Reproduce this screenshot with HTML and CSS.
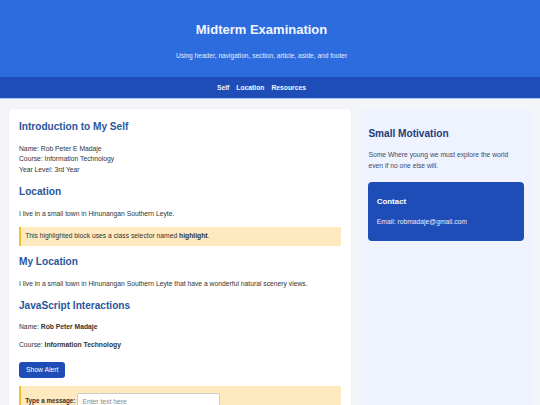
FILE: index.html
```html
<!DOCTYPE html>
<html lang="en">
<head>
  <meta charset="UTF-8"/>
  <meta name="viewport" content="width=device-width, initial-scale=1.0"/>
  <title>Midterm Examination</title>
  <link rel="stylesheet" href="styles.css">
</head>
<body>
<header class="site-header">
  <h1>Midterm Examination</h1>
  <p>Using header, navigation, section, article, aside, and footer</p>
</header>

<nav class="site-nav">
  <a href="#self">Self</a>
  <a href="#location">Location</a>
  <a href="#resources">Resources</a>
</nav>

<div class="layout">
  <main class="card">
    <section id="self">
      <h2>Introduction to My Self</h2>
      <p>Name: Rob Peter E Madaje<br>Course: Information Technology<br>Year Level: 3rd Year</p>
    </section>

    <section id="location">
      <h2>Location</h2>
      <p>I live in a small town in Hinunangan Southern Leyte.</p>
      <div class="highlight">This highlighted block uses a class selector named <strong>highlight</strong>.</div>
    </section>

    <article>
      <h2>My Location</h2>
      <p>I live in a small town in Hinunangan Southern Leyte that have a wonderful natural scenery views.</p>
    </article>

    <section id="resources">
      <h2>JavaScript Interactions</h2>
      <p>Name: <strong>Rob Peter Madaje</strong></p>
      <p>Course: <strong>Information Technology</strong></p>
      <div class="actions">
        <button class="btn" onclick="showAlert()">Show Alert</button>
      </div>
      <div class="highlight message-row">
        <label for="msgInput">Type a message:</label>
        <input id="msgInput" type="text" placeholder="Enter text here"/>
      </div>
    </section>
  </main>

  <aside class="sidebar">
    <h2>Small Motivation</h2>
    <p>Some Where young we must explore the world even if no one else will.</p>
    <div class="contact">
      <h3>Contact</h3>
      <p>Email: robmadaje@gmail.com</p>
    </div>
  </aside>
</div>

<script>
  function showAlert() {
    const msg = document.getElementById('msgInput').value.trim();
    alert(msg ? msg : 'Hello from Rob Peter Madaje!');
  }
</script>
</body>
</html>
```

FILE: styles.css
```css
body {
  margin: 0;
  background-color: #f3f5f9;
  font-family: 'Liberation Sans', Arial, sans-serif;
  font-size: 6.75px;
  line-height: 10.8px;
  color: #333;
}

.site-header {
  background-color: #2d6cdf;
  color: #f2f6ff;
  text-align: center;
  padding: 22px 17px 17.5px 0;
}

.site-header h1 {
  margin: 0;
  font-size: 13px;
  line-height: 16px;
  font-weight: 700;
}

.site-header p {
  margin: 12.5px 0 0;
  font-size: 6.6px;
  line-height: 9px;
  color: #e3ecff;
}

.site-nav {
  background-color: #1e4db7;
  border-bottom: 1px solid #a9c4f4;
  display: flex;
  justify-content: center;
  gap: 7px;
  padding-right: 17px;
  line-height: 21px;
}

.site-nav a {
  color: #f2f6ff;
  font-weight: 700;
  text-decoration: none;
}

.layout {
  display: grid;
  grid-template-columns: 342px 172px;
  gap: 9px;
  padding: 10px 8px 0 9px;
}

.card {
  background: #fff;
  border-radius: 4px;
  padding: 10px;
  box-shadow: 0 0 3px rgba(0,0,0,0.04);
}

.card h2 {
  margin: 8.4px 0;
  font-size: 10.1px;
  line-height: 16.2px;
  color: #2a569b;
}

.card section:first-child h2 {
  margin-top: 0;
}

.card p {
  margin: 6.75px 0;
}

.highlight {
  background-color: #ffe9bf;
  border-left: 2px solid #f3c02f;
  padding: 4.2px 4.2px;
  margin-top: 6.75px;
}

.actions {
  margin: 11px 0 8px;
}

.btn {
  display: block;
  background-color: #1e4db7;
  color: #fff;
  border: none;
  border-radius: 3px;
  font-family: inherit;
  font-size: 6.75px;
  line-height: 8px;
  padding: 4px 7px;
  cursor: pointer;
}

.message-row {
  margin-top: 0;
  padding-top: 7px;
  display: flex;
  align-items: center;
  gap: 2px;
}

.message-row label {
  font-weight: 700;
  font-size: 6.3px;
  color: #333;
}

.message-row input {
  width: 143px;
  box-sizing: border-box;
  height: 17px;
  border: 1px solid #ccc;
  border-radius: 2px;
  font-family: inherit;
  font-size: 6.75px;
  padding: 0 4px;
  background: #fff;
}

.message-row input::placeholder {
  color: #888;
}

.sidebar {
  background-color: #eef3ff;
  border-radius: 4px;
  padding: 8.4px;
}

.sidebar h2 {
  margin: 8.4px 0;
  font-size: 10.1px;
  line-height: 16.2px;
  color: #1f3c7c;
}

.sidebar p {
  margin: 8.4px 0 6.75px;
  color: #3c4a6d;
}

.contact {
  background-color: #1e4db7;
  border-radius: 4px;
  padding: 8.4px;
  margin-top: 10px;
  color: #fff;
}

.contact h3 {
  margin: 5.3px 0 8.3px;
  font-size: 7.9px;
  line-height: 12.6px;
}

.contact p {
  margin: 0 0 5.2px;
  color: #e8eeff;
}
```
